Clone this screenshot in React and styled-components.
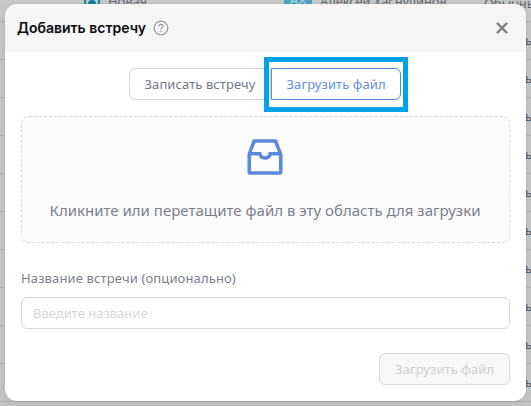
import React from 'react';
import styled, { createGlobalStyle } from 'styled-components';

const Global = createGlobalStyle`
  * { box-sizing: border-box; }
  body { margin: 0; overflow: hidden; font-family: 'Noto Sans', sans-serif; }
  button, input { font-family: inherit; margin: 0; }
`;

const Page = styled.main`
  position: relative;
  width: 531px;
  height: 406px;
  overflow: hidden;
  background: #c3c5c4;
`;

const Table = styled.div`
  display: grid;
  grid-template-columns: 531px;
  grid-template-rows: 22px repeat(10, 38px) 4px;
`;

const Row = styled.div`
  display: flex;
  align-items: flex-end;
  justify-content: flex-end;
  border-bottom: 1px solid #b0b2b2;
`;

const TopRow = styled(Row)`
  display: grid;
  grid-template-columns: 84px 24px 176px 36px 164px 1fr;
  align-items: start;
  justify-content: start;
  background: #c6c7c7;
  color: #686b70;
  font-size: 13px;
  line-height: 18px;
  white-space: nowrap;
`;

const RowText = styled.span`
  margin-top: ${(p) => p.$top ?? -8}px;
  letter-spacing: -0.1px;
`;

const RowTail = styled.span`
  width: 6px;
  height: 26px;
  font-size: 13px;
  line-height: 14px;
  color: #555b66;
`;

const Status = styled.svg`
  grid-column: 2;
  margin-top: -6px;
`;

const Initials = styled.span`
  width: 28px;
  height: 28px;
  margin-top: -20px;
  padding-top: 11px;
  border-radius: 4px;
  background: #4fa3be;
  color: #a8cfdb;
  font-size: 14px;
  line-height: 18px;
  text-align: center;
`;

const Dialog = styled.section`
  position: absolute;
  left: 5px;
  top: 4px;
  width: 521px;
  height: 397px;
  border-radius: 12px;
  background: #fff;
  box-shadow: 0 0 2px rgba(0, 0, 0, 0.12), 0 3px 8px rgba(0, 0, 0, 0.05);
  overflow: hidden;
`;

const Header = styled.header`
  display: flex;
  align-items: center;
  height: 48px;
  padding: 0 18px 0 12px;
  background: #f6f6f6;
`;

const Title = styled.h1`
  margin: 0 8px 0 0;
  width: 128px;
  font: 600 14px/20px Inter, sans-serif;
  color: #0b0b0d;
  white-space: nowrap;
`;

const Close = styled.button`
  display: flex;
  margin-left: auto;
  padding: 0;
  border: 0;
  background: none;
`;

const Body = styled.div`
  display: flex;
  flex-direction: column;
  padding: 16px;
`;

const Modes = styled.div`
  display: flex;
  justify-content: center;
  height: 32px;
  margin-bottom: 16px;
  padding-right: 2px;
`;

const Button = styled.button`
  width: ${(p) => p.$width}px;
  height: 32px;
  padding: 0 0 0 15px;
  text-align: left;
  border: 1px solid ${(p) => (p.$active ? '#5987d8' : '#d9d9dc')};
  border-radius: ${(p) => p.$radius || '6px'};
  background: ${(p) => (p.$muted ? '#f7f7f7' : '#fff')};
  color: ${(p) => (p.$active ? '#6690dc' : p.$muted ? '#d0d1d4' : '#747986')};
  font-size: 13px;
  line-height: 22px;
  letter-spacing: 0.08px;
  white-space: nowrap;
`;

const Marked = styled.div`
  position: relative;
  &::after {
    content: '';
    position: absolute;
    inset: -11px -7px -12px -7px;
    border: 5px solid #00a2e8;
    pointer-events: none;
  }
`;

const DropZone = styled.div`
  display: flex;
  flex-direction: column;
  align-items: center;
  height: 127px;
  padding: 16px 1px 0 0;
  border: 1px dashed #d9d9d9;
  border-radius: 8px;
  background: #fcfcfc;
`;

const DropText = styled.p`
  margin: 17px 0 0;
  font-size: 15px;
  line-height: 24px;
  color: #7b7f8b;
  white-space: nowrap;
`;

const Label = styled.label`
  margin: 24px 0 8px;
  font-size: 13px;
  line-height: 22px;
  letter-spacing: 0.13px;
  color: #7b7f8b;
`;

const Input = styled.input`
  height: 32px;
  padding: 0 11px;
  border: 1px solid #d9d9dc;
  border-radius: 6px;
  background: #fff;
  font-size: 13px;
  outline: 0;
  &::placeholder { color: #d6d7da; opacity: 1; }
`;

const Footer = styled.footer`
  display: flex;
  justify-content: flex-end;
  margin-top: 24px;
`;

const HelpIcon = () => (
  <svg width="16" height="16" viewBox="0 0 16 16" fill="none" stroke="#9297a5" strokeWidth="1.2">
    <circle cx="8" cy="8" r="6.8" />
    <path d="M5.9 6.4C5.9 5.1 6.8 4.4 8 4.4s2.1.8 2.1 1.9c0 1-.7 1.5-1.4 1.9-.5.3-.7.6-.7 1.3" />
    <path d="M8 10.6v1.3" />
  </svg>
);

const CloseIcon = () => (
  <svg width="12" height="12" viewBox="0 0 12 12" stroke="#858585" strokeWidth="2.5">
    <path d="M.9.9l10.2 10.2M11.1.9L.9 11.1" />
  </svg>
);

const InboxIcon = () => (
  <svg width="48" height="48" viewBox="0 0 1024 1024" fill="#5b88da">
    <path d="M885.2 446.3l-.2-.8-112.2-285.1c-5-16.1-19.9-27.2-36.8-27.2H281.2c-17 0-32.1 11.3-36.9 27.6L139.4 443l-.3.7-.2.8c-1.3 4.9-1.7 9.9-1 14.8-.1 1.6-.2 3.2-.2 4.8V830a60.9 60.9 0 0060.8 60.8h627.2c33.5 0 60.8-27.3 60.9-60.8V464.1c0-1.3 0-2.6-.1-3.7.4-4.9 0-9.6-1.3-14.1zm-295.8-43l-.3 15.7c-.8 44.9-31.8 75.1-77.1 75.1-22.1 0-41.1-7.1-54.8-20.6S436 441.2 435.6 419l-.3-15.7H229.5L309 210h399.2l81.7 193.3H589.4zm-375 76.8h157.3c24.3 57.1 76 90.8 140.4 90.8 33.7 0 65-9.4 90.3-27.2 22.2-15.6 39.5-37.4 50.7-63.6h156.5V814H214.4V480.1z" />
  </svg>
);

export default function App() {
  return (
    <Page>
      <Global />
      <Table>
        <TopRow>
          <Status width="16" height="16" viewBox="0 0 16 16">
            <circle cx="8" cy="8" r="7" fill="#c6c7c7" stroke="#138195" strokeWidth="2" />
            <circle cx="8" cy="10" r="4" fill="#138195" />
          </Status>
          <RowText>Новая</RowText>
          <Initials>АХ</Initials>
          <RowText>Алексей Хаснулинов</RowText>
          <RowText $top={-6}>Обычны</RowText>
        </TopRow>
        {Array.from({ length: 10 }, (_, i) => (
          <Row key={i}>
            <RowTail>ь</RowTail>
          </Row>
        ))}
      </Table>
      <Dialog role="dialog">
        <Header>
          <Title>Добавить встречу</Title>
          <HelpIcon />
          <Close aria-label="Закрыть"><CloseIcon /></Close>
        </Header>
        <Body>
          <Modes>
            <Button $width={142} $radius="6px 0 0 6px">Записать встречу</Button>
            <Marked>
              <Button $width={130} $radius="0 6px 6px 0" $active>Загрузить файл</Button>
            </Marked>
          </Modes>
          <DropZone>
            <InboxIcon />
            <DropText>Кликните или перетащите файл в эту область для загрузки</DropText>
          </DropZone>
          <Label htmlFor="meeting-name">Название встречи (опционально)</Label>
          <Input id="meeting-name" placeholder="Введите название" />
          <Footer>
            <Button $width={131} $muted disabled>Загрузить файл</Button>
          </Footer>
        </Body>
      </Dialog>
    </Page>
  );
}
